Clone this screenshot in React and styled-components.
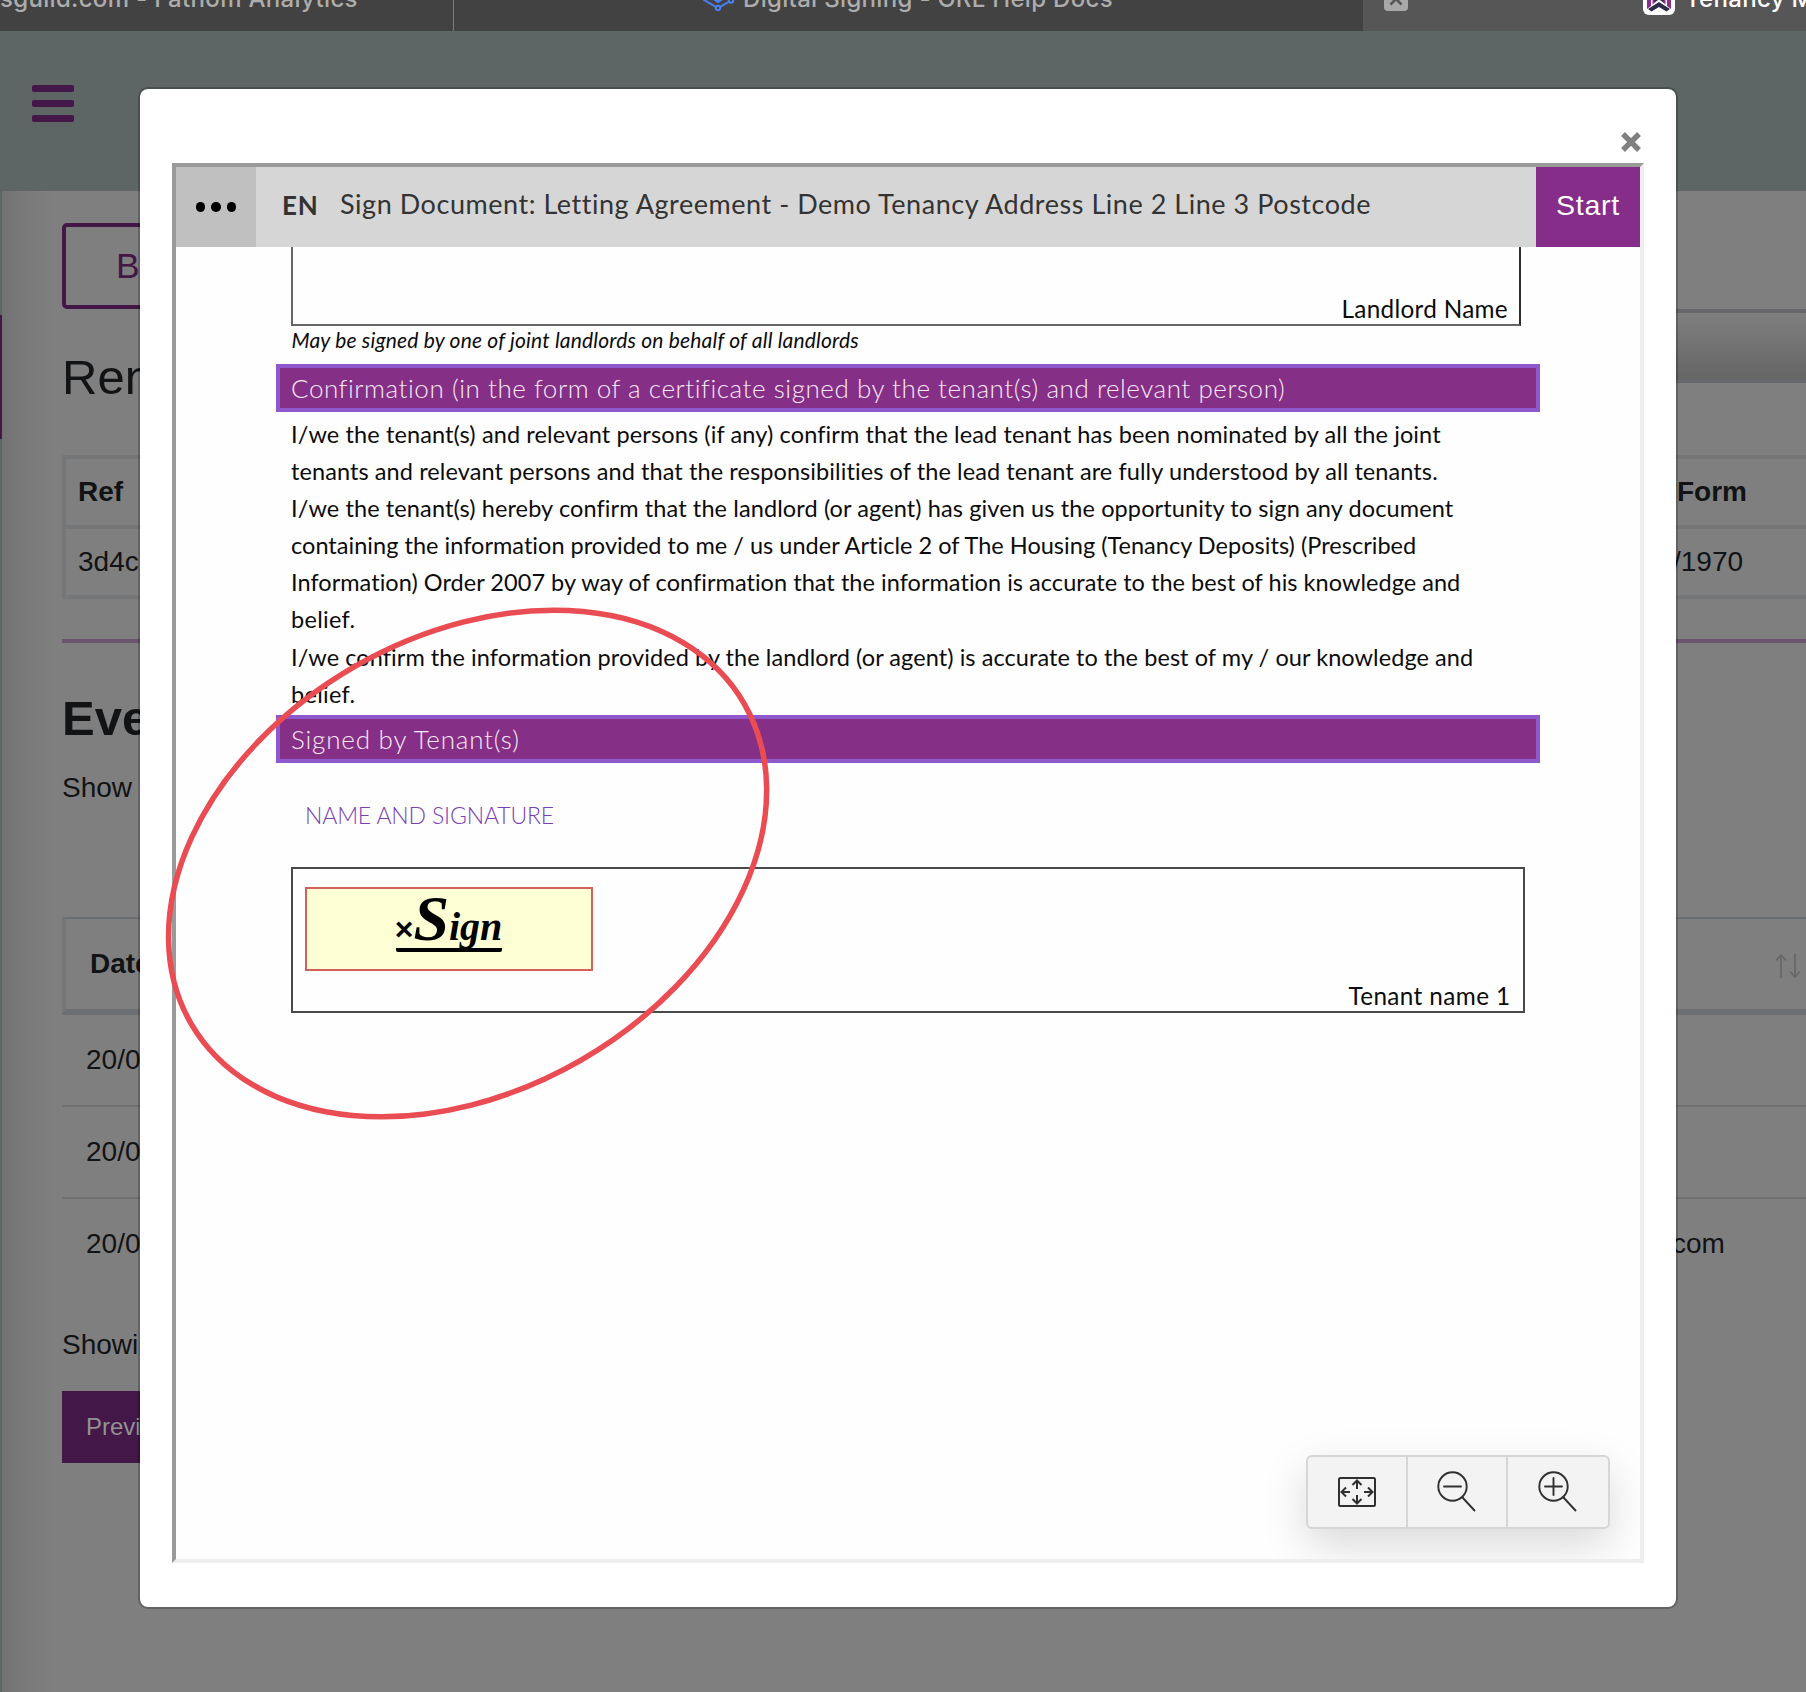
import React from "react";
import styled, { createGlobalStyle } from "styled-components";

const sans = '"Liberation Sans", Arial, Helvetica, sans-serif';
const doc = 'Lato, Carlito, Calibri, sans-serif';
const ink = "#111315";
const plum = "#431747";

const GlobalStyle = createGlobalStyle`
  *, *::before, *::after { box-sizing: border-box; }
  html, body { margin: 0; padding: 0; overflow: hidden; }
`;

const Screen = styled.div`
  position: relative;
  width: 1806px;
  height: 1692px;
  overflow: hidden;
  display: flex;
  flex-direction: column;
  background: #7f7f7f;
  color: ${ink};
  font-family: ${sans};
  font-size: 28px;
  line-height: 42px;
  white-space: nowrap;
`;

/* Browser tabs */
const TabBar = styled.div`
  display: flex;
  flex: none;
  height: 31px;
  overflow: hidden;
  background: #424242;
`;

const Tab = styled.div`
  display: flex;
  align-items: flex-start;
  flex: none;
  width: ${(p) => p.$width}px;
  padding-left: ${(p) => p.$pad || 0}px;
  border-left: ${(p) => (p.$divider ? "1px solid #7b7b7b" : "none")};
  background: ${(p) => (p.$active ? "#565656" : "#424242")};
  color: ${(p) => (p.$active ? "#ffffff" : "#adadad")};
`;

const TabTitle = styled.span`
  margin-top: -13px;
  font: 500 24px/24px Inter, sans-serif;
  font-feature-settings: "calt" 0;
  letter-spacing: 0.32px;
`;

const HexLogo = styled.svg`
  flex: none;
  width: 34px;
  height: 34px;
  margin: -23px 8px 0 0;
`;

const TabClose = styled.div`
  flex: none;
  width: 24px;
  height: 24px;
  margin: -13px 235px 0 0;
  border-radius: 4px;
  background: #a8a8a8;
  svg { display: block; }
`;

const Favicon = styled.div`
  flex: none;
  width: 32px;
  height: 32px;
  margin: -17px 10px 0 0;
  border-radius: 6px;
  background: #ffffff;
  svg { display: block; }
`;

/* Dimmed application behind the dialog */
const Header = styled.header`
  flex: none;
  height: 160px;
  padding: 54px 32px 0;
  background: #5d6664;
`;

const Burger = styled.div`
  display: flex;
  flex-direction: column;
  gap: 8px;
  width: 42px;
  span { height: 7px; border-radius: 2px; background: ${plum}; }
`;

const Body = styled.div`
  display: flex;
  flex: 1;
  min-height: 0;
`;

const SideStrip = styled.div`
  flex: none;
  width: 2px;
  padding-top: 124px;
  background: #5d6664;
  &::before { content: ""; display: block; height: 124px; background: ${plum}; }
`;

const Main = styled.main`
  flex: 1;
  min-width: 0;
  padding: 32px 0 0 60px;
  background: linear-gradient(90deg, #727272 0, #797979 20px, #7f7f7f 52px);
`;

const TopRow = styled.div`
  display: flex;
  justify-content: space-between;
  height: 232px;
`;

const BackButton = styled.div`
  width: 180px;
  height: 86px;
  padding-left: 50px;
  border: 4px solid ${plum};
  border-radius: 5px;
  color: ${plum};
  font-size: 35.5px;
  line-height: 79px;
`;

const Heading = styled.h1`
  margin: ${(p) => p.$top}px 0 0;
  font-size: 49px;
  line-height: 60px;
  font-weight: ${(p) => (p.$bold ? 700 : 400)};
`;

const Band = styled.div`
  width: 180px;
  height: 74px;
  margin-top: 86px;
  border: solid #66686b;
  border-width: 4px 0;
  background: linear-gradient(#7f7f7f, #656565);
`;

const RefTable = styled.div`
  border: 4px solid #757677;
  border-right: 0;
`;

const RefRow = styled.div`
  display: grid;
  grid-template-columns: 1595px 1fr;
  height: ${(p) => (p.$head ? 70 : 66)}px;
  padding-left: 12px;
  line-height: 66px;
  font-weight: ${(p) => (p.$head ? 700 : 400)};
  border-bottom: ${(p) => (p.$head ? "4px solid #757677" : "0")};
`;

const FormHead = styled.span`
  padding-left: 4px;
`;

const Rule = styled.div`
  height: 4px;
  margin-top: 40px;
  background: #6b556e;
`;

const ShowText = styled.div`
  margin-top: 19px;
`;

const EventHead = styled.div`
  display: flex;
  justify-content: space-between;
  align-items: center;
  height: 98px;
  margin-top: 108px;
  padding: 0 5px 0 24px;
  border: solid #6b6f73;
  border-width: 2px 0 6px 4px;
  border-left-color: #757677;
  font-weight: 700;
  svg { display: block; margin-top: 3px; }
`;

const EventRow = styled.div`
  display: grid;
  grid-template-columns: 1586px 1fr;
  height: ${(p) => (p.$last ? 90 : 92)}px;
  padding-left: 24px;
  line-height: 90px;
  border-bottom: ${(p) => (p.$last ? "0" : "2px solid #6e7071")};
`;

const Summary = styled.div`
  margin-top: 35px;
`;

const PreviousButton = styled.div`
  width: 150px;
  height: 72px;
  margin-top: 25px;
  padding-left: 24px;
  background: ${plum};
  color: #929292;
  font-size: 24px;
  line-height: 72px;
`;

/* Dialog */
const Dialog = styled.section`
  position: absolute;
  left: 138px;
  top: 87px;
  width: 1540px;
  height: 1522px;
  padding: 0 32px;
  border: 2px solid rgba(0, 0, 0, 0.22);
  border-radius: 10px;
  background: #ffffff;
  background-clip: padding-box;
`;

const CloseRow = styled.div`
  display: flex;
  justify-content: flex-end;
  height: 74px;
  padding: 43px 3px 0 0;
`;

const Frame = styled.div`
  position: relative;
  display: flex;
  flex-direction: column;
  height: 1400px;
  overflow: hidden;
  border: 4px solid;
  border-color: #9a9a9a #eeeeee #eeeeee #9a9a9a;
  background: #fefefe;
`;

const Toolbar = styled.div`
  display: flex;
  flex: none;
  height: 80px;
  background: #d6d6d6;
  color: #333333;
`;

const MenuButton = styled.div`
  display: flex;
  align-items: center;
  justify-content: center;
  gap: 6px;
  width: 80px;
  background: #c0c0c0;
  span { width: 9.5px; height: 9.5px; border-radius: 50%; background: #000000; }
`;

const Language = styled.span`
  padding-left: 26px;
  width: 84px;
  font: 700 26px/77px ${doc};
  letter-spacing: 0.8px;
`;

const Title = styled.span`
  flex: 1;
  font: 400 27px/74px ${doc};
  letter-spacing: 0.54px;
`;

const StartButton = styled.div`
  width: 104px;
  background: #852d89;
  color: #ffffff;
  text-align: center;
  font-size: 28.5px;
  line-height: 77px;
  letter-spacing: 0.8px;
`;

const Page = styled.div`
  flex: 1;
  min-height: 0;
  color: #0c0c0c;
  font-family: ${doc};
`;

const LandlordBox = styled.div`
  display: flex;
  align-items: flex-end;
  justify-content: flex-end;
  width: 1230px;
  height: 79px;
  margin-left: 115px;
  padding-right: 11px;
  border: solid #666666;
  border-width: 0 2px 2px;
  border-right-color: #2c2c2c;
`;

const PartyName = styled.span`
  font-size: 24.3px;
  line-height: 30px;
  letter-spacing: ${(p) => p.$spacing}px;
`;

const Note = styled.div`
  margin-left: 115.5px;
  font-size: 21px;
  font-style: italic;
  line-height: 27px;
  letter-spacing: 0.18px;
`;

const Banner = styled.div`
  width: 1264px;
  height: 48px;
  margin: ${(p) => p.$top}px 0 0 100px;
  padding-left: 11px;
  border: 4px solid #9058cd;
  background: #862f87;
  color: #f6eaf6;
  font-size: 26px;
  font-weight: 300;
  line-height: 41px;
  letter-spacing: ${(p) => p.$spacing}px;
`;

const Clauses = styled.div`
  margin: 4px 0 0 115px;
  font-size: 23.5px;
  line-height: 37.1px;
`;

const Line = styled.div`
  letter-spacing: ${(p) => p.$spacing}px;
`;

const FieldLabel = styled.div`
  margin: 37px 0 0 129px;
  color: #7a3fb5;
  font-size: 23px;
  font-weight: 300;
  line-height: 30px;
  letter-spacing: -0.15px;
`;

const TenantBox = styled.div`
  display: flex;
  justify-content: space-between;
  width: 1234px;
  height: 146px;
  margin: 37px 0 0 114.5px;
  padding: 18px 12px 0;
  border: 2px solid #4a4a4a;
  ${PartyName} { align-self: flex-end; }
`;

const SignField = styled.div`
  display: flex;
  justify-content: center;
  width: 288px;
  height: 84px;
  padding-top: 3px;
  border: 2px solid #d45f5b;
  background: #fefed5;
`;

const SignMark = styled.div`
  display: flex;
  align-items: baseline;
  justify-content: center;
  width: 106px;
  height: 60px;
  border-bottom: 4px solid #000000;
  border-radius: 2px;
  color: #000000;
  font: italic 700 40px/54px "Liberation Serif", serif;
  b { font: 700 32px/54px ${sans}; }
  big { font-size: 64px; }
`;

const ZoomBar = styled.div`
  position: absolute;
  right: 30px;
  bottom: 30px;
  display: flex;
  width: 304px;
  height: 74px;
  border: 2px solid #d6d6d6;
  border-radius: 6px;
  background: #f3f3f3;
  box-shadow: 0 16px 44px rgba(0, 0, 0, 0.15);
`;

const ZoomButton = styled.div`
  display: flex;
  align-items: center;
  justify-content: center;
  flex: none;
  width: ${(p) => p.$width}px;
  & + & { border-left: 2px solid #d6d6d6; }
`;

const Annotation = styled.svg`
  position: absolute;
  left: 160px;
  top: 600px;
`;

const clauses = [
  ["I/we the tenant(s) and relevant persons (if any) confirm that the lead tenant has been nominated by all the joint", 0.12],
  ["tenants and relevant persons and that the responsibilities of the lead tenant are fully understood by all tenants.", 0.09],
  ["I/we the tenant(s) hereby confirm that the landlord (or agent) has given us the opportunity to sign any document", 0.11],
  ["containing the information provided to me / us under Article 2 of The Housing (Tenancy Deposits) (Prescribed", 0.03],
  ["Information) Order 2007 by way of confirmation that the information is accurate to the best of his knowledge and", 0.04],
  ["belief.", 0.3],
  ["I/we confirm the information provided by the landlord (or agent) is accurate to the best of my / our knowledge and", 0.07],
  ["belief.", 0.3],
];

const events = [
  { date: "20/0", mail: "" },
  { date: "20/0", mail: "" },
  { date: "20/0", mail: "com" },
];

function Magnifier({ plus }) {
  return (
    <svg width="40" height="42" viewBox="0 0 40 42" fill="none" stroke="#303030" strokeWidth="1.9" strokeLinecap="round">
      <circle cx="15.5" cy="15.5" r="14.2" />
      <path d="M25.5 26.5L37.5 39.5M7 15.5h17" />
      {plus && <path d="M15.5 7v17" />}
    </svg>
  );
}

export default function App() {
  return (
    <Screen>
      <GlobalStyle />
      <TabBar>
        <Tab $width={453}>
          <TabTitle>sguild.com - Fathom Analytics</TabTitle>
        </Tab>
        <Tab $width={910} $pad={247} $divider>
          <HexLogo viewBox="0 0 34 34" fill="none" stroke="#4a80ef" strokeWidth="2">
            <path d="M17 3L31 11V23L17 31L3 23V11Z" />
            <path d="M11 21l6 4 6-4-6-3z" fill="#4a80ef" />
            <circle cx="17" cy="31" r="2.2" fill="#424242" />
            <circle cx="30" cy="23.5" r="2.2" fill="#424242" />
          </HexLogo>
          <TabTitle>Digital Signing - GRL Help Docs</TabTitle>
        </Tab>
        <Tab $width={443} $pad={21} $active>
          <TabClose>
            <svg width="24" height="24" stroke="#565656" strokeWidth="2.6">
              <path d="M6.5 6.5l11 11M17.5 6.5l-11 11" />
            </svg>
          </TabClose>
          <Favicon>
            <svg width="32" height="32">
              <path d="M4 2h4v21l-4 3zM9.500 2h3v17l-3 2.500zM28 2h-4v21l4 3zM22.500 2h-3v17l3 2.500z" fill="#872f8b" />
              <path d="M16 19l11 7-3.500 2.500-7.500-4.500-7.500 4.500L5 26zM16 12l4.500 5v2.500L16 16.500l-4.500 3V17z" fill="#2b2a48" />
            </svg>
          </Favicon>
          <TabTitle>Tenancy M</TabTitle>
        </Tab>
      </TabBar>

      <Header>
        <Burger><span /><span /><span /></Burger>
      </Header>

      <Body>
        <SideStrip />
        <Main>
          <TopRow>
            <div>
              <BackButton>Back</BackButton>
              <Heading $top={38}>Ren</Heading>
            </div>
            <Band />
          </TopRow>
          <RefTable>
            <RefRow $head><span>Ref</span><FormHead>Form</FormHead></RefRow>
            <RefRow><span>3d4c</span><span>/1970</span></RefRow>
          </RefTable>
          <Rule />
          <Heading $top={45} $bold>Eve</Heading>
          <ShowText>Show</ShowText>
          <EventHead>
            <span>Date</span>
            <svg width="26" height="26" viewBox="0 0 26 26" fill="none" stroke="#686868" strokeWidth="1.8">
              <path d="M6 25V2M1 7.500L6 2l5 5.500M20 1v23M15 18.500l5 5.500 5-5.500" />
            </svg>
          </EventHead>
          {events.map((e, i) => (
            <EventRow key={i} $last={i === events.length - 1}>
              <span>{e.date}</span>
              <span>{e.mail}</span>
            </EventRow>
          ))}
          <Summary>Showi</Summary>
          <PreviousButton>Previ</PreviousButton>
        </Main>
      </Body>

      <Dialog>
        <CloseRow>
          <svg width="20" height="20" viewBox="0 0 20 20" stroke="#808080" strokeWidth="5.4">
            <path d="M2 2l16 16M18 2L2 18" />
          </svg>
        </CloseRow>
        <Frame>
          <Toolbar>
            <MenuButton><span /><span /><span /></MenuButton>
            <Language>EN</Language>
            <Title>Sign Document: Letting Agreement - Demo Tenancy Address Line 2 Line 3 Postcode</Title>
            <StartButton>Start</StartButton>
          </Toolbar>
          <Page>
            <LandlordBox><PartyName $spacing={0.3}>Landlord Name</PartyName></LandlordBox>
            <Note>May be signed by one of joint landlords on behalf of all landlords</Note>
            <Banner $top={11} $spacing={0.55}>
              Confirmation (in the form of a certificate signed by the tenant(s) and relevant person)
            </Banner>
            <Clauses>
              {clauses.map(([text, spacing], i) => (
                <Line key={i} $spacing={spacing}>{text}</Line>
              ))}
            </Clauses>
            <Banner $top={2} $spacing={0.8}>Signed by Tenant(s)</Banner>
            <FieldLabel>NAME AND SIGNATURE</FieldLabel>
            <TenantBox>
              <SignField>
                <SignMark><b>×</b><big>S</big>ign</SignMark>
              </SignField>
              <PartyName $spacing={0.4}>Tenant name 1</PartyName>
            </TenantBox>
          </Page>
          <ZoomBar>
            <ZoomButton $width={98}>
              <svg width="40" height="32" viewBox="0 0 40 32" fill="none" stroke="#303030" strokeWidth="2">
                <rect x="2" y="2" width="36" height="28" rx="1.500" />
                <path d="M20 13V5M15.500 9L20 4.500 24.500 9M20 19v8M15.500 23l4.500 4.500 4.500-4.500M13 16H5M9 11.500L4.500 16 9 20.500M27 16h8M31 11.500l4.500 4.500-4.500 4.500" />
              </svg>
            </ZoomButton>
            <ZoomButton $width={100}><Magnifier /></ZoomButton>
            <ZoomButton $width={102}><Magnifier plus /></ZoomButton>
          </ZoomBar>
        </Frame>
      </Dialog>

      <Annotation width="620" height="530" viewBox="160 600 620 530">
        <ellipse cx="467.600" cy="863.500" rx="319.500" ry="227" transform="rotate(-30 467.600 863.500)" fill="none" stroke="#e94c52" strokeWidth="5.500" />
      </Annotation>
    </Screen>
  );
}
